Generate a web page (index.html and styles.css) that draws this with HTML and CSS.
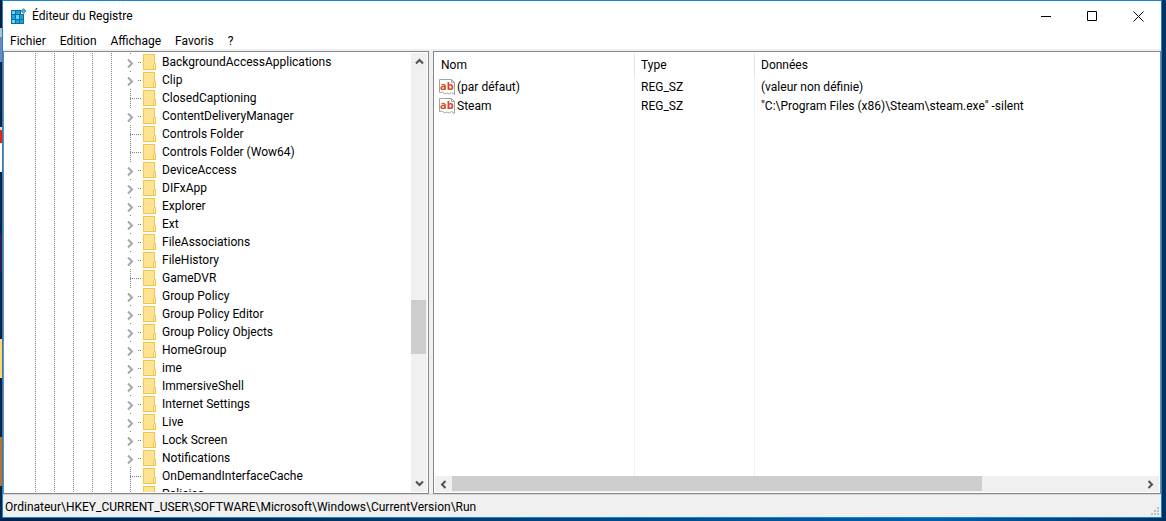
FILE: index.html
```html
<!DOCTYPE html>
<html lang="fr">
<head>
    <meta charset="UTF-8">
    <meta name="viewport" content="width=device-width, initial-scale=1.0">
    <title>Éditeur du Registre</title>
    <link rel="stylesheet" href="styles.css">
</head>
<body>
<svg class="symbols" width="0" height="0" aria-hidden="true">
    <symbol id="folder" viewBox="0 0 13 16">
        <path d="M0 0h12v9h1v7H0z" fill="#edc84c"/>
        <path d="M1 1h10v14H1z" fill="#ffe391"/>
        <path d="M11 10h1v5h-1z" fill="#fff0b8"/>
        <path d="M10 10h1v5h-1z" fill="#edc84c"/>
    </symbol>
    <symbol id="chevron" viewBox="0 0 7 11">
        <path d="M1 1.500l4 4-4 4" fill="none" stroke="#a6a6a6" stroke-width="2"/>
    </symbol>
    <symbol id="string" viewBox="0 0 16 16">
        <path d="M.5.500h12l3 3v12l-3-2-2 1.500-3-1-2 1-2-2-3 .5z" fill="#fff" stroke="#a3a3a3"/>
        <path d="M12.500.500v3h3" fill="none" stroke="#a3a3a3"/>
    </symbol>
</svg>

<div class="window">
    <header class="title-bar">
        <svg class="app-icon" width="16" height="16" viewBox="0 0 16 16" aria-hidden="true">
            <path d="M0 2h10v4h3v10H0z" fill="#0b6f9f"/>
            <path d="M1 3h3v3H1zM5 7h3v4H5zM1 12h3v3H1z" fill="#6fd3f5"/>
            <path d="M5 3h4v3H5zM1 7h3v4H1zM9 7h3v4H9zM5 12h3v3H5zM9 12h3v3H9z" fill="#19a5dc"/>
            <path d="M12.500.700l2.300 2.300-2.300 2.300L10.200 3z" fill="#58b9de" stroke="#1583b3"/>
        </svg>
        <h1>Éditeur du Registre</h1>
        <div class="window-buttons">
            <button type="button" aria-label="Réduire"><svg width="11" height="11"><path d="M0 5h10v1H0z"/></svg></button>
            <button type="button" aria-label="Agrandir"><svg width="11" height="11"><path d="M.5.500h9v9h-9z" fill="none" stroke="#000"/></svg></button>
            <button type="button" aria-label="Fermer"><svg width="11" height="11"><path d="M.5.500l10 10M10.500.500l-10 10" stroke="#000"/></svg></button>
        </div>
    </header>

    <nav class="menu">
        <button type="button">Fichier</button>
        <button type="button">Edition</button>
        <button type="button">Affichage</button>
        <button type="button">Favoris</button>
        <button type="button">?</button>
    </nav>

    <main class="panes">
        <section class="pane tree-pane">
            <ul class="tree" id="tree"></ul>
            <div class="scrollbar vertical">
                <button type="button" aria-label="Haut"><svg width="9" height="7"><path d="M1 5.500l3.500-3.500L8 5.500"/></svg></button>
                <div class="track"><div class="thumb"></div></div>
                <button type="button" aria-label="Bas"><svg width="9" height="7"><path d="M1 1.500L4.500 5 8 1.500"/></svg></button>
            </div>
        </section>

        <section class="pane values-pane">
            <table class="values">
                <thead>
                <tr>
                    <th class="name">Nom</th>
                    <th class="type">Type</th>
                    <th>Données</th>
                </tr>
                </thead>
                <tbody>
                <tr>
                    <td><span class="value-name"><span class="value-icon"><svg width="16" height="16" aria-hidden="true"><use href="#string"/></svg><b>ab</b></span>(par défaut)</span></td>
                    <td>REG_SZ</td>
                    <td>(valeur non définie)</td>
                </tr>
                <tr>
                    <td><span class="value-name"><span class="value-icon"><svg width="16" height="16" aria-hidden="true"><use href="#string"/></svg><b>ab</b></span>Steam</span></td>
                    <td>REG_SZ</td>
                    <td>"C:\Program Files (x86)\Steam\steam.exe" -silent</td>
                </tr>
                <tr class="filler"><td></td><td></td><td></td></tr>
                </tbody>
            </table>
            <div class="scrollbar horizontal">
                <button type="button" aria-label="Gauche"><svg width="7" height="9"><path d="M5.500 1L2 4.500 5.500 8"/></svg></button>
                <div class="track"><div class="thumb"></div></div>
                <button type="button" aria-label="Droite"><svg width="7" height="9"><path d="M1.500 1L5 4.500 1.500 8"/></svg></button>
            </div>
        </section>
    </main>

    <footer class="status-bar">
        <span>Ordinateur\HKEY_CURRENT_USER\SOFTWARE\Microsoft\Windows\CurrentVersion\Run</span>
        <svg class="grip" width="8" height="8" aria-hidden="true"><path d="M6 0h2v2H6zM3 3h2v2H3zM6 3h2v2H6zM0 6h2v2H0zM3 6h2v2H3zM6 6h2v2H6z"/></svg>
    </footer>
</div>

<script src="tree.js"></script>
</body>
</html>
```

FILE: styles.css
```css
* {
    box-sizing: border-box;
}
body {
    margin: 0;
    height: 100vh;
    padding: 0 4px 3px 2px;
    overflow: hidden;
    /* desktop: strip of icons on the left, blue wallpaper elsewhere */
    background:
        linear-gradient(to bottom, #06203f 28px, #a9c6d6 28px 37px, #6d86c4 37px 62px, #04264a 62px 127px, #d6e2ea 127px 130px, #e62310 130px 143px, #fff 143px 172px, #04264a 172px 234px, #2a2058 234px 272px, #04264a 272px 339px, #ffd870 339px 378px, #04264a 378px 437px, #b5742c 437px 486px, #04264a 486px) 0 0 / 2px 100% no-repeat,
        linear-gradient(to right, #00214a, #00284f 15%, #0060b0 80%, #003264);
    color: #000;
    font: 12px/18px Roboto, "Open Sans", "Noto Sans", sans-serif;
}
button {
    padding: 0;
    border: 0;
    background: none;
    color: inherit;
    font: inherit;
}
svg {
    display: block;
}
.symbols {
    position: absolute;
}

.window {
    display: flex;
    flex-direction: column;
    height: 100%;
    border: 1px solid #1883d7;
    background: #fff;
}

.title-bar {
    display: flex;
    align-items: center;
    flex: 0 0 30px;
    padding-left: 8px;
}
.title-bar h1 {
    flex: 1;
    margin: 0 0 0 5px;
    font-size: 12px;
    font-weight: normal;
}
.window-buttons {
    display: flex;
}
.window-buttons button {
    display: flex;
    align-items: center;
    justify-content: center;
    width: 46px;
    height: 30px;
}

.menu {
    display: flex;
    flex: 0 0 18px;
    gap: 14px;
    padding: 2px 0 0 7px;
    line-height: 16px;
}

.panes {
    display: flex;
    flex: 1;
    gap: 4px;
    min-height: 0;
    padding-top: 2px;
    background: #f0f0f0;
}
.pane {
    display: flex;
    min-width: 0;
    padding: 1px;
    border: 1px solid #828790;
    background: #fff;
}
.tree-pane {
    flex: 0 0 426px;
}
.values-pane {
    flex: 1;
    flex-direction: column;
}

/* tree */
.tree {
    --dots: repeating-linear-gradient(to bottom, #808080 0 1px, transparent 1px 2px);
    flex: 1;
    margin: 0;
    padding: 0 0 0 122px;
    overflow: hidden;
    list-style: none;
    background-image: var(--dots), var(--dots), var(--dots), var(--dots), var(--dots), var(--dots);
    background-position: 30px 0, 49px 0, 68px 0, 87px 0, 106px 0, 125px 0;
    background-size: 1px 100%;
    background-repeat: no-repeat;
}
.tree li {
    display: flex;
    align-items: center;
    height: 18px;
    white-space: nowrap;
}
.toggle {
    width: 7px;
    padding: 3px 0 1px;
    background: #fff;
}
.branch {
    width: 3px;
    height: 1px;
    margin: 0 2px 0 4px;
    background: repeating-linear-gradient(to right, #808080 0 1px, transparent 1px 2px);
}
.leaf .branch {
    width: 11px;
    margin-left: 3px;
}
.tree .label {
    margin-left: 6px;
}

/* values */
.values {
    flex: 1;
    width: 100%;
    height: 100%;
    table-layout: fixed;
    border-collapse: separate;
    border-spacing: 0;
}
.values th,
.values td {
    height: 19px;
    padding: 0 0 0 6px;
    border-right: 1px solid #e5f3ff;
    text-align: left;
    font-weight: normal;
    white-space: nowrap;
}
.values th {
    height: 24px;
    border-color: #e5e5e5;
}
.values th:last-child,
.values td:last-child {
    border-right: 0;
}
.values .name {
    width: 200px;
}
.values .type {
    width: 120px;
}
.values .filler td {
    height: auto;
}
.value-name {
    display: flex;
    align-items: center;
    gap: 2px;
    margin-left: -2px;
}
.value-icon {
    position: relative;
}
.value-icon b {
    position: absolute;
    top: 1px;
    left: 1px;
    color: #d24726;
    font: bold 11px/12px "Open Sans", sans-serif;
}

/* scrollbars */
.scrollbar {
    display: flex;
    background: #f0f0f0;
}
.scrollbar button {
    display: flex;
    align-items: center;
    justify-content: center;
    flex: 0 0 17px;
}
.scrollbar path {
    fill: none;
    stroke: #505050;
    stroke-width: 2;
}
.track {
    display: flex;
    flex: 1;
}
.track::after {
    content: "";
}
.thumb {
    background: #cdcdcd;
}
.vertical {
    flex: 0 0 16px;
    flex-direction: column;
}
.vertical .track {
    flex-direction: column;
}
.vertical .track::before {
    content: "";
    flex: 229;
}
.vertical .thumb {
    flex: 54;
    margin-right: 1px;
}
.vertical .track::after {
    flex: 121;
}
.horizontal {
    flex: 0 0 16px;
}
.horizontal .thumb {
    flex: 530;
    margin-bottom: 1px;
}
.horizontal .track::after {
    flex: 160;
}

.status-bar {
    display: flex;
    justify-content: space-between;
    align-items: center;
    flex: 0 0 23px;
    padding: 2px 2px 0;
    border-top: 1px solid #d7d7d7;
    background: #f0f0f0;
}
.grip {
    align-self: flex-end;
    margin-bottom: 2px;
    fill: #bfbfbf;
}
```

FILE: tree.js
```js
// [name, has subkeys]
const keys = [
    ['BackgroundAccessApplications', true],
    ['Clip', true],
    ['ClosedCaptioning', false],
    ['ContentDeliveryManager', true],
    ['Controls Folder', false],
    ['Controls Folder (Wow64)', false],
    ['DeviceAccess', true],
    ['DIFxApp', true],
    ['Explorer', true],
    ['Ext', true],
    ['FileAssociations', true],
    ['FileHistory', true],
    ['GameDVR', false],
    ['Group Policy', true],
    ['Group Policy Editor', true],
    ['Group Policy Objects', true],
    ['HomeGroup', true],
    ['ime', true],
    ['ImmersiveShell', true],
    ['Internet Settings', true],
    ['Live', true],
    ['Lock Screen', true],
    ['Notifications', true],
    ['OnDemandInterfaceCache', false],
    ['Policies', false],
];

document.getElementById('tree').innerHTML = keys.map(([name, hasChildren]) => `
    <li class="${hasChildren ? 'node' : 'leaf'}">
        ${hasChildren ? `<button type="button" class="toggle" aria-label="Développer ${name}"><svg width="7" height="11"><use href="#chevron"/></svg></button>` : ''}
        <span class="branch"></span>
        <svg width="13" height="16" aria-hidden="true"><use href="#folder"/></svg>
        <span class="label">${name}</span>
    </li>
`).join('');
```
